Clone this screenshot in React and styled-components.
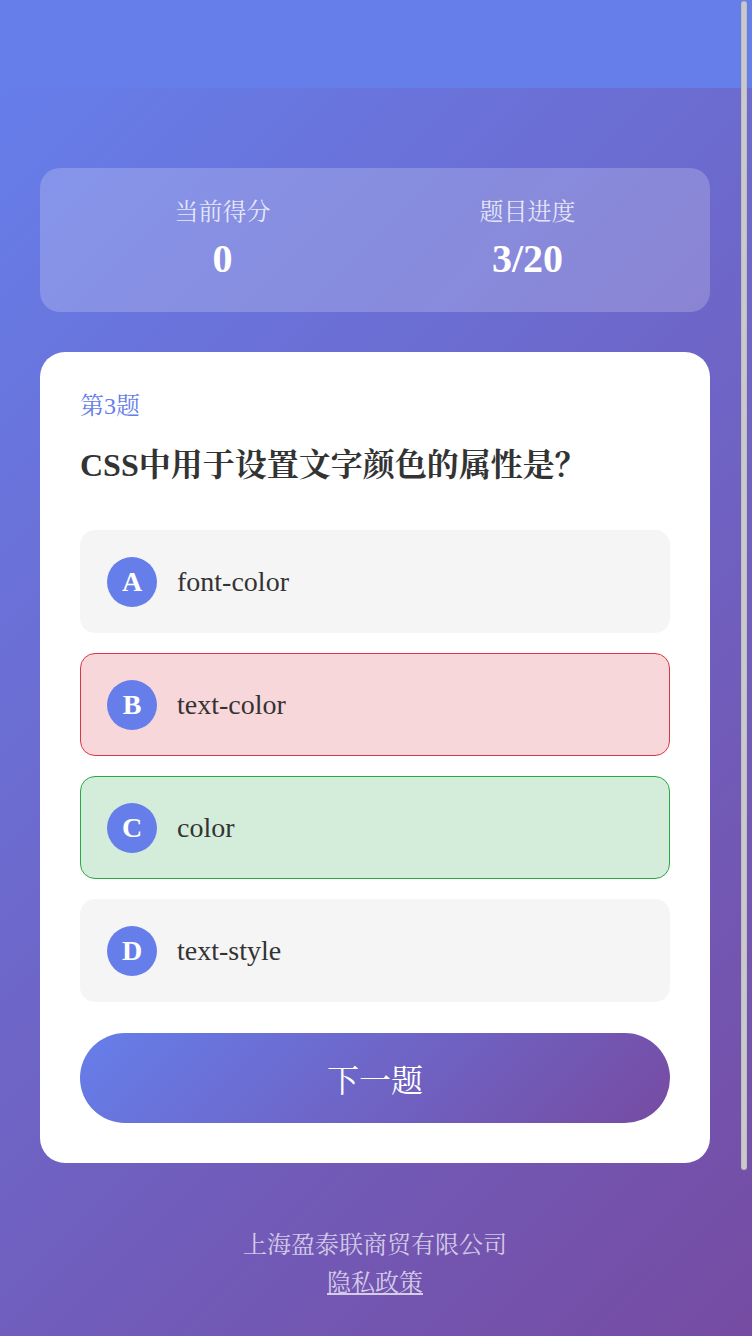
import React from "react";
import styled, { createGlobalStyle } from "styled-components";

const GlobalStyle = createGlobalStyle`
  html, body {
    margin: 0;
    padding: 0;
  }
  body {
    font-family: "Liberation Serif", "Noto Serif CJK SC", "Noto Sans CJK SC", serif;
    color: #333;
    background: #764ba2;
  }
  * { box-sizing: border-box; }
`;

const Header = styled.header`
  height: 88px;
  background: #667eea;
`;

const Main = styled.main`
  min-height: calc(100vh - 88px);
  padding: 80px 40px 40px;
  background: linear-gradient(135deg, #667eea 0%, #764ba2 100%);
`;

const Content = styled.div`
  max-width: 670px;
`;

const ScrollThumb = styled.div`
  position: fixed;
  top: 1px;
  right: 5px;
  width: 6px;
  height: 1169px;
  border-radius: 3px;
  background: #c9c9cc;
  box-shadow: inset 0 0 0 1px rgba(0, 0, 0, 0.06);
`;

const StatsCard = styled.section`
  display: flex;
  padding: 30px;
  border-radius: 20px;
  background: rgba(255, 255, 255, 0.2);
`;

const StatItem = styled.div`
  flex: 1;
  text-align: center;
`;

const StatLabel = styled.div`
  font-size: 24px;
  line-height: 28px;
  color: rgba(255, 255, 255, 0.8);
`;

const StatValue = styled.div`
  margin-top: 10px;
  font-size: 40px;
  line-height: 46px;
  font-weight: bold;
  color: #fff;
`;

const QuestionCard = styled.section`
  margin-top: 40px;
  padding: 40px;
  border-radius: 25px;
  background: #fff;
`;

const QuestionNumber = styled.div`
  font-size: 24px;
  line-height: 28px;
  color: #667eea;
`;

const QuestionTitle = styled.h2`
  margin: 21px 0 41px;
  font-size: 32px;
  line-height: 48px;
  font-weight: bold;
  color: #333;
`;

const OptionList = styled.div`
  display: flex;
  flex-direction: column;
  gap: 20px;
`;

const variants = {
  normal: { bg: "#f5f5f5", border: "transparent" },
  wrong: { bg: "#f8d7da", border: "#dc3545" },
  correct: { bg: "#d4edda", border: "#28a745" },
};

const Option = styled.div`
  display: flex;
  align-items: center;
  gap: 20px;
  padding: 25.5px 25px 25.5px 26px;
  border-radius: 15px;
  border: 1px solid ${(p) => variants[p.$state].border};
  background: ${(p) => variants[p.$state].bg};
`;

const Letter = styled.span`
  flex: none;
  display: flex;
  align-items: center;
  justify-content: center;
  width: 50px;
  height: 50px;
  border-radius: 50%;
  background: #667eea;
  color: #fff;
  font-size: 28px;
  font-weight: bold;
`;

const OptionText = styled.span`
  font-size: 28px;
  color: #333;
`;

const NextButton = styled.button`
  display: block;
  width: 100%;
  height: 90px;
  margin-top: 31px;
  border: none;
  border-radius: 45px;
  background: linear-gradient(135deg, #667eea 0%, #764ba2 100%);
  color: #fff;
  font-family: inherit;
  font-size: 32px;
  cursor: pointer;
`;

const Footer = styled.footer`
  margin-top: 63px;
  text-align: center;
  font-size: 24px;
  line-height: 38px;
  color: rgba(255, 255, 255, 0.7);
`;

const FooterLink = styled.a`
  color: inherit;
  text-decoration: underline;
`;

const options = [
  { key: "A", text: "font-color", state: "normal" },
  { key: "B", text: "text-color", state: "wrong" },
  { key: "C", text: "color", state: "correct" },
  { key: "D", text: "text-style", state: "normal" },
];

export default function App() {
  return (
    <>
      <GlobalStyle />
      <Header />
      <Main>
        <Content>
          <StatsCard>
            <StatItem>
              <StatLabel>当前得分</StatLabel>
              <StatValue>0</StatValue>
            </StatItem>
            <StatItem>
              <StatLabel>题目进度</StatLabel>
              <StatValue>3/20</StatValue>
            </StatItem>
          </StatsCard>
          <QuestionCard>
            <QuestionNumber>第3题</QuestionNumber>
            <QuestionTitle>CSS中用于设置文字颜色的属性是？</QuestionTitle>
            <OptionList>
              {options.map((o) => (
                <Option key={o.key} $state={o.state}>
                  <Letter>{o.key}</Letter>
                  <OptionText>{o.text}</OptionText>
                </Option>
              ))}
            </OptionList>
            <NextButton>下一题</NextButton>
          </QuestionCard>
          <Footer>
            <div>上海盈泰联商贸有限公司</div>
            <div>
              <FooterLink href="#">隐私政策</FooterLink>
            </div>
          </Footer>
        </Content>
      </Main>
      <ScrollThumb aria-hidden="true" />
    </>
  );
}
